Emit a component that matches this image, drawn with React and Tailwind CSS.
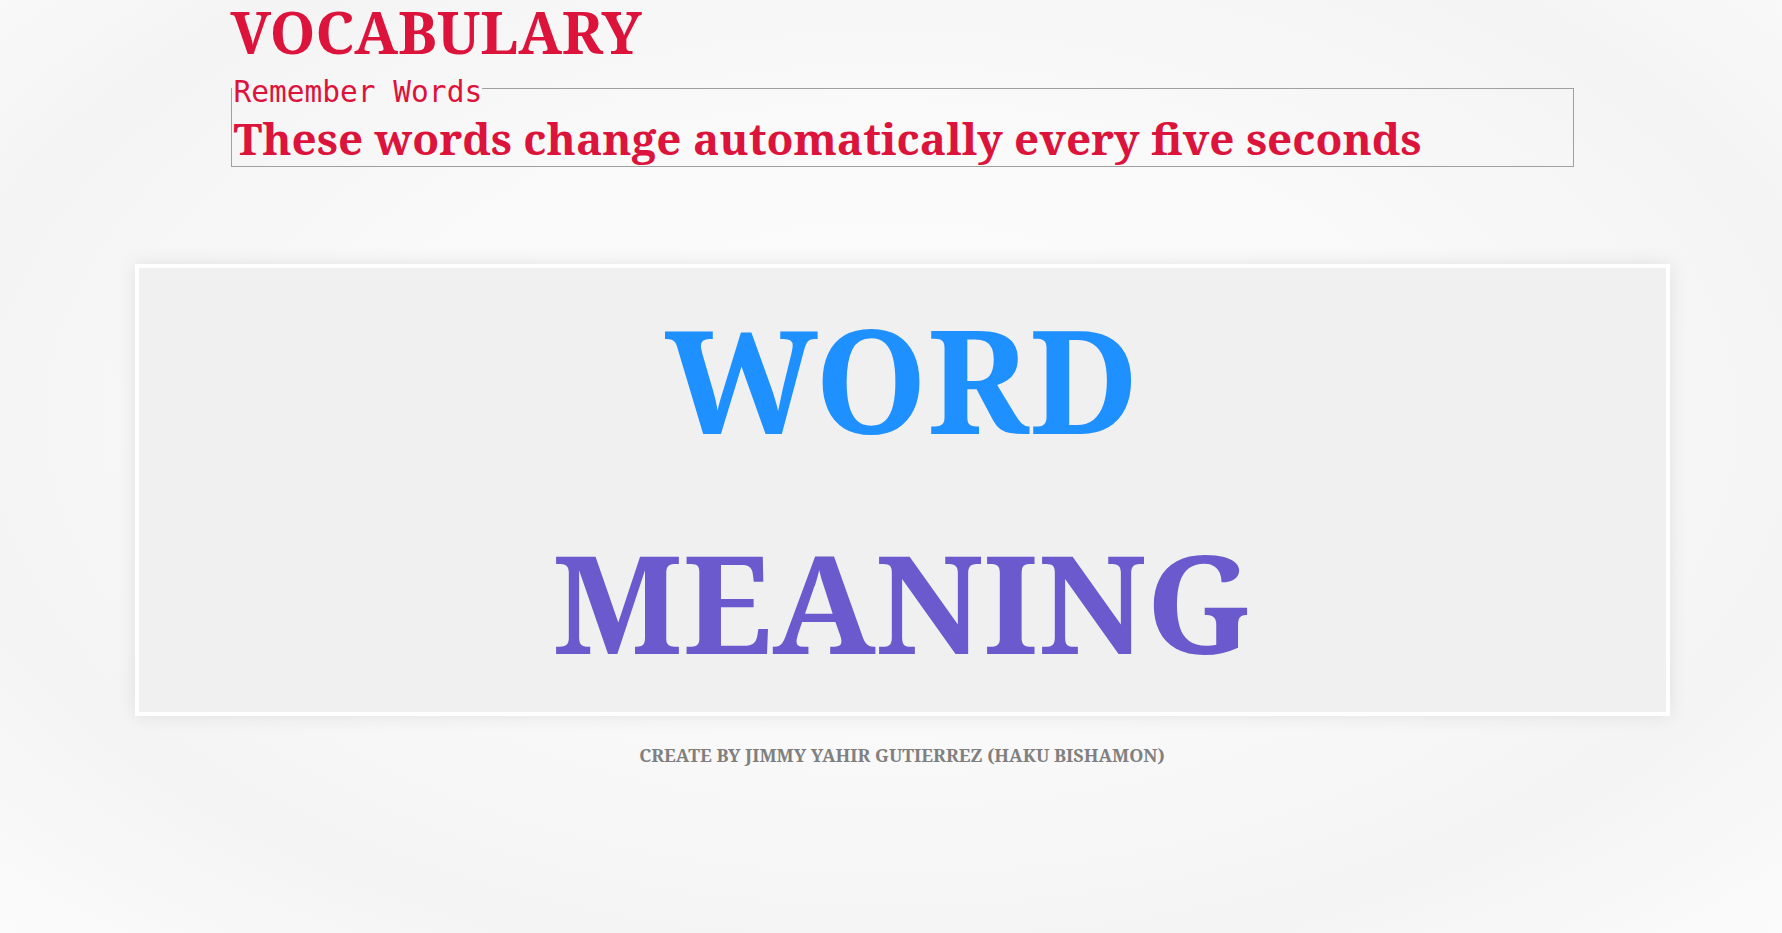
const serif = { fontFamily: '"Noto Serif", "DejaVu Serif", serif' };

function Header() {
  return (
    <div className="w-[1343px]">
      <h1 className="text-[58px] font-bold leading-[60px] text-[#dc143c]" style={serif}>
        VOCABULARY
      </h1>
      <fieldset className="border border-[#a0a0a0] p-0 pb-[3px] m-0 mt-[5px]">
        <legend
          className="p-0 pt-2 pl-0.5 text-[29.5px] text-[#dc143c] leading-[34px]"
          style={{ fontFamily: '"DejaVu Sans Mono", "Liberation Mono", monospace' }}
        >
          Remember Words
        </legend>
        <p className="text-[44px] font-bold leading-[50px] text-[#dc143c] mt-[4px] pl-0.5" style={serif}>
          These words change automatically every five seconds
        </p>
      </fieldset>
    </div>
  );
}

function Card() {
  return (
    <div
      className="w-[1535px] mt-[97px] bg-[#f0f0f0] border-4 border-white shadow-[0_0_18px_rgba(0,0,0,0.09)] text-center font-bold leading-[222px]"
      style={serif}
    >
      <div className="text-[143px] text-[#1e90ff]">WORD</div>
      <div className="text-[137px] text-[#6a5acd]">MEANING</div>
    </div>
  );
}

export default function App() {
  return (
    <div className="min-h-screen pt-[2px] bg-[radial-gradient(ellipse_at_50%_45%,#fdfdfd_0%,#f9f9f9_45%,#f4f4f4_75%,#fbfbfb_100%)]">
      <div className="flex flex-col items-center pl-[22px]">
        <Header />
        <Card />
        <p className="mt-[26px] text-[18px] font-bold text-[#808080]" style={serif}>
          CREATE BY JIMMY YAHIR GUTIERREZ (HAKU BISHAMON)
        </p>
      </div>
    </div>
  );
}
